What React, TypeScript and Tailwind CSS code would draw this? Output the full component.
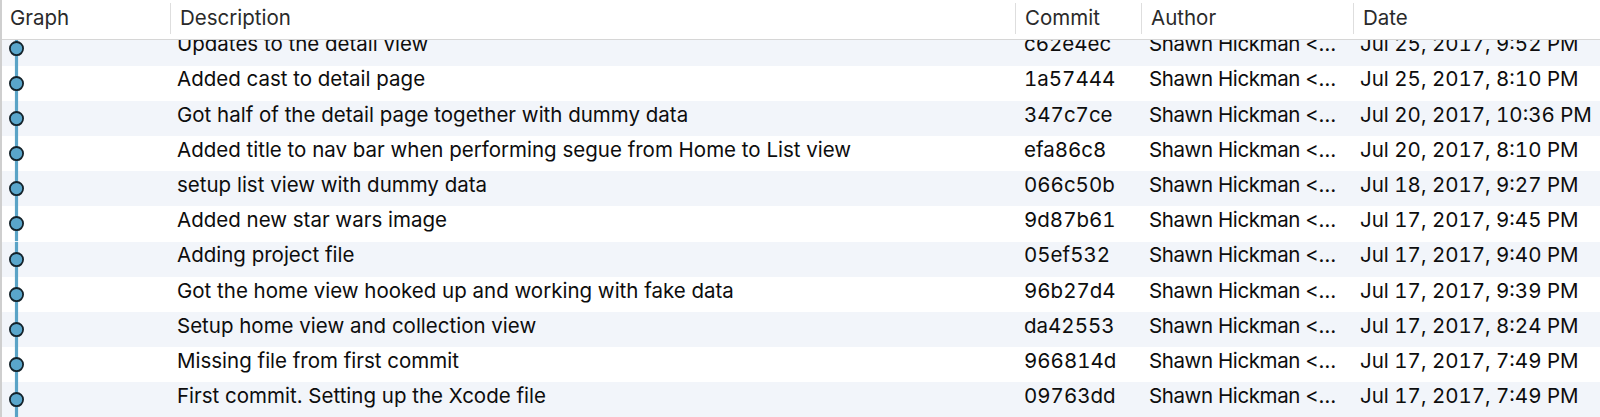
const COMMITS = [
  { msg: 'Updates to the detail view', hash: 'c62e4ec', date: 'Jul 25, 2017, 9:52 PM' },
  { msg: 'Added cast to detail page', hash: '1a57444', date: 'Jul 25, 2017, 8:10 PM' },
  { msg: 'Got half of the detail page together with dummy data', hash: '347c7ce', date: 'Jul 20, 2017, 10:36 PM' },
  { msg: 'Added title to nav bar when performing segue from Home to List view', hash: 'efa86c8', date: 'Jul 20, 2017, 8:10 PM' },
  { msg: 'setup list view with dummy data', hash: '066c50b', date: 'Jul 18, 2017, 9:27 PM' },
  { msg: 'Added new star wars image', hash: '9d87b61', date: 'Jul 17, 2017, 9:45 PM' },
  { msg: 'Adding project file', hash: '05ef532', date: 'Jul 17, 2017, 9:40 PM' },
  { msg: 'Got the home view hooked up and working with fake data', hash: '96b27d4', date: 'Jul 17, 2017, 9:39 PM' },
  { msg: 'Setup home view and collection view', hash: 'da42553', date: 'Jul 17, 2017, 8:24 PM' },
  { msg: 'Missing file from first commit', hash: '966814d', date: 'Jul 17, 2017, 7:49 PM' },
  { msg: 'First commit. Setting up the Xcode file', hash: '09763dd', date: 'Jul 17, 2017, 7:49 PM' },
];

const COLS = [
  { label: 'Graph', w: 'w-[168px]' },
  { label: 'Description', w: 'w-[845px]' },
  { label: 'Commit', w: 'w-[126px]' },
  { label: 'Author', w: 'w-[212px]' },
  { label: 'Date', w: 'flex-1' },
];

function GraphNode() {
  return (
    <svg width="30" height="35.2" viewBox="0 0 30 35.2" className="block">
      <line x1="14.5" y1="0" x2="14.5" y2="35.2" stroke="#5aa3c6" strokeWidth="3.2" />
      <circle cx="14.5" cy="17.6" r="6.6" fill="#5aa6cb" stroke="#14232b" strokeWidth="1.8" />
    </svg>
  );
}

export default function App() {
  return (
    <div
      className="w-[1600px] h-[417px] overflow-hidden bg-white border-l-[2px] border-[#cfcfcf] text-[20.5px] text-[#0d0d0d]"
      style={{ fontFamily: 'Inter, "Liberation Sans", sans-serif' }}
    >
      {/* header */}
      <div className="flex h-[40px] border-b border-[#d6d6d6] text-[#2a2a2a]">
        {COLS.map((c, i) => (
          <div key={c.label} className={`${c.w} flex items-center shrink-0`}>
            {i > 0 && <div className="w-px h-[31px] bg-[#dedede] mb-[2px]" />}
            <span className={`${i === 0 ? 'pl-[8px]' : 'pl-[9px]'} pb-[2px]`}>{c.label}</span>
          </div>
        ))}
      </div>

      <div className="h-[377px] overflow-hidden">
        <div className="mt-[-9.5px]">
          {COMMITS.map((c, i) => (
            <div key={c.hash} className={`flex h-[35.2px] items-center ${i % 2 === 0 ? 'bg-[#f2f5fa]' : 'bg-white'}`}>
              <div className="w-[168px] shrink-0 self-stretch">
                <GraphNode />
              </div>
              <div className="w-[845px] shrink-0 pl-[7px] pb-[7px] whitespace-nowrap">{c.msg}</div>
              <div className="w-[126px] shrink-0 pl-[9px] pb-[7px] tabular-nums">{c.hash}</div>
              <div className="w-[212px] shrink-0 pl-[8px] pb-[7px] whitespace-nowrap tracking-[-0.4px]">Shawn Hickman &lt;…</div>
              <div className="flex-1 pl-[7px] pb-[7px] whitespace-nowrap tabular-nums">{c.date}</div>
            </div>
          ))}
        </div>
      </div>
    </div>
  );
}
